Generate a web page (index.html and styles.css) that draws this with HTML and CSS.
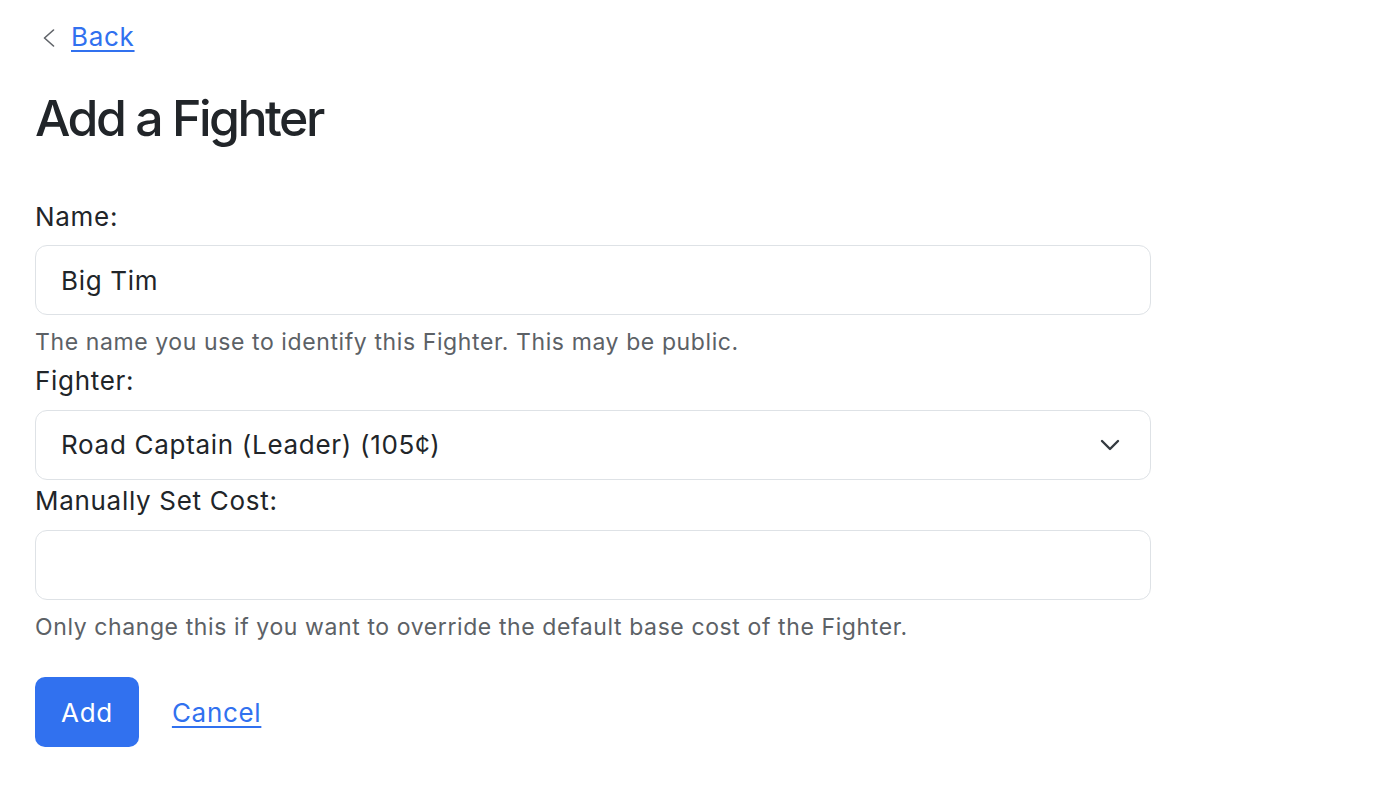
FILE: index.html
```html
<!DOCTYPE html>
<html lang="en">
<head>
<meta charset="utf-8">
<title>Add a Fighter</title>
<link rel="stylesheet" href="styles.css">
</head>
<body>
<main class="page">
  <nav class="back">
    <svg class="back-icon" width="13" height="18" viewBox="0 0 13 18" aria-hidden="true">
      <path d="M11.5 1 L2.5 9 L11.5 17" fill="none" stroke="#5f6368" stroke-width="1.6" stroke-linecap="round" stroke-linejoin="round"/>
    </svg>
    <a href="#" class="link">Back</a>
  </nav>
  <h1 class="title">Add a Fighter</h1>
  <form class="form">
    <div class="field">
      <label class="label" for="name">Name:</label>
      <input class="control" id="name" type="text" value="Big Tim">
      <div class="help">The name you use to identify this Fighter. This may be public.</div>
    </div>
    <div class="field">
      <label class="label" for="fighter">Fighter:</label>
      <div class="select" id="fighter">
        <span>Road Captain (Leader) (105¢)</span>
        <svg class="chev" width="20" height="12" viewBox="0 0 20 12" aria-hidden="true">
          <path d="M2 2 L10 10 L18 2" fill="none" stroke="#343a40" stroke-width="2.4" stroke-linecap="round" stroke-linejoin="round"/>
        </svg>
      </div>
    </div>
    <div class="field">
      <label class="label" for="cost">Manually Set Cost:</label>
      <input class="control" id="cost" type="text" value="">
      <div class="help">Only change this if you want to override the default base cost of the Fighter.</div>
    </div>
    <div class="actions">
      <button type="button" class="btn">Add</button>
      <a href="#" class="link">Cancel</a>
    </div>
  </form>
</main>
</body>
</html>
```
FILE: styles.css
```css
* { box-sizing: border-box; }
html, body { margin: 0; padding: 0; background: #fff; }
body {
  font-family: Inter, "Noto Sans", "Liberation Sans", sans-serif;
  color: #212529;
  font-size: 26px;
  line-height: 39px;
  letter-spacing: 0.7px;
}
.page {
  padding: 17px 0 0 35px;
  width: 1151px;
}
.back {
  display: flex;
  align-items: center;
  gap: 16px;
  margin-left: -35px;
  padding-left: 42px;
  height: 39px;
}
.back-icon { display: block; margin-top: 2px; }
.link {
  color: #3171ef;
  text-decoration: underline;
  text-underline-offset: 4px;
  text-decoration-thickness: 1.5px;
}
.title {
  margin: 32px 0 0 0;
  font-size: 50px;
  font-weight: 500;
  line-height: 60px;
  letter-spacing: -2.5px;
}
.form {
  margin-top: 49px;
  display: flex;
  flex-direction: column;
}
.field { display: flex; flex-direction: column; }
.label {
  display: block;
  margin-bottom: 9px;
}
.control, .select {
  width: 100%;
  height: 70px;
  border: 1.5px solid #dee2e6;
  border-radius: 12px;
  font: inherit;
  letter-spacing: inherit;
  color: #212529;
  padding: 0 25px;
  background: #fff;
}
.select {
  display: flex;
  align-items: center;
  justify-content: space-between;
  padding-right: 30px;
}
.chev { display: block; }
.help {
  font-size: 23px;
  line-height: 34.5px;
  letter-spacing: 0.6px;
  color: #5c6166;
  margin-top: 10px;
  margin-bottom: 1px;
}
.field:nth-child(2) { margin-bottom: 1px; }
.field:nth-child(2) .label { margin-bottom: 10px; }
.field:nth-child(3) .label { margin-bottom: 10px; }
.actions {
  margin-top: 32px;
  display: flex;
  align-items: center;
  gap: 33px;
}
.btn {
  font: inherit;
  letter-spacing: inherit;
  color: #fff;
  background: #3171ef;
  border: none;
  border-radius: 10px;
  height: 70px;
  padding: 0 26px;
}
```
